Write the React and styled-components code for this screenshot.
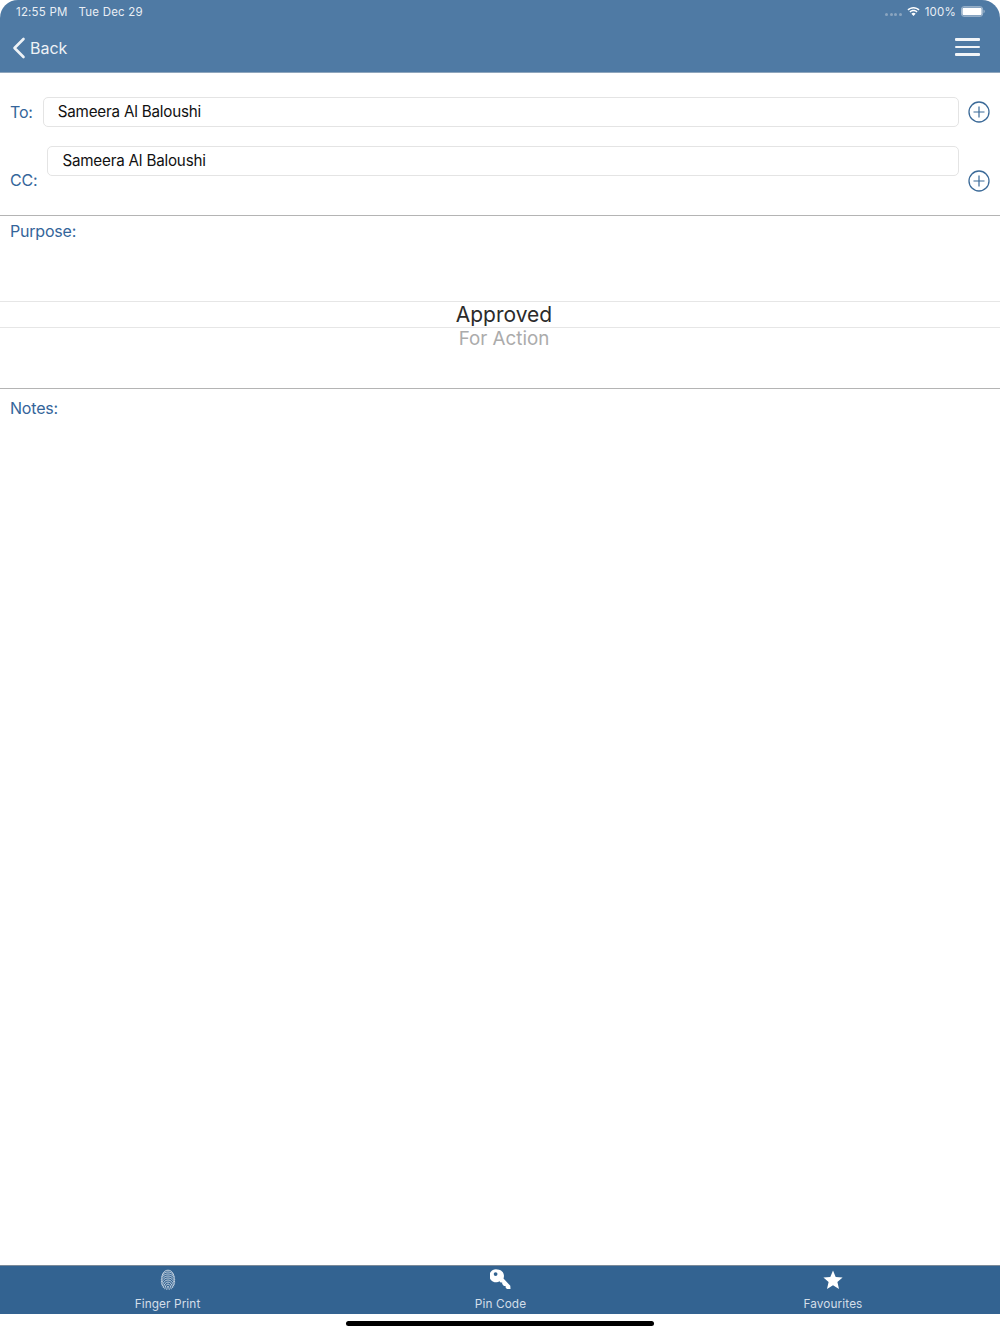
import styled, { createGlobalStyle } from 'styled-components'

const GlobalStyle = createGlobalStyle`
  html, body { margin: 0; padding: 0; background: #fff; }
  body { font-family: Inter, "Liberation Sans", sans-serif; }
`

const Page = styled.div`
  width: 1000px;
  height: 1334px;
  display: flex;
  flex-direction: column;
  overflow: hidden;
  background: #fff;
`

const Header = styled.header`
  height: 72px;
  flex: none;
  background: #4f7aa4;
  border-radius: 18px 18px 0 0;
  border-bottom: 1px solid #8fa6bd;
  color: #fff;
`

const StatusBar = styled.div`
  height: 24px;
  box-sizing: border-box;
  padding: 0 15px 1px 16px;
  display: flex;
  align-items: center;
  justify-content: space-between;
  font-size: 11.5px;
  letter-spacing: 0.2px;
  color: #e9eef4;
`

const StatusGroup = styled.div`
  display: flex;
  align-items: center;
  gap: ${p => p.$gap || 10}px;
`

const SignalDots = styled.div`
  display: flex;
  gap: 1.5px;
  margin-top: 6px;
  span {
    width: 3px;
    height: 3px;
    border-radius: 50%;
    background: #8ba5c0;
  }
`

const NavBar = styled.div`
  height: 48px;
  display: flex;
  align-items: center;
  justify-content: space-between;
  padding: 0 20px 0 12px;
`

const BackLink = styled.div`
  display: flex;
  align-items: center;
  gap: 4px;
  font-size: 16px;
  color: #eef2f6;
  svg { display: block; }
`

const Burger = styled.div`
  width: 25px;
  display: flex;
  flex-direction: column;
  gap: 5px;
  margin-top: -2px;
  span {
    height: 2.5px;
    background: #f2f5f8;
    border-radius: 1px;
  }
`

const RecipientSection = styled.section`
  height: 143px;
  flex: none;
  padding-top: 24px;
  box-sizing: border-box;
  border-bottom: 1px solid #b4b4b4;
`

const RecipientRow = styled.div`
  display: flex;
  align-items: ${p => (p.$top ? 'flex-start' : 'center')};
  padding: 0 10px;
  margin-bottom: 19px;
`

const FieldLabel = styled.label`
  font-size: 16px;
  letter-spacing: -0.2px;
  color: #34659a;
  line-height: 20px;
`

const RowLabel = styled(FieldLabel)`
  flex: none;
  margin-right: 10px;
  ${p => p.$low && 'margin-top: 24px;'}
`

const NameInput = styled.div`
  flex: 1;
  height: 30px;
  box-sizing: border-box;
  border: 1px solid #e4e4e4;
  border-radius: 5px;
  padding: 0 0 1px 14px;
  display: flex;
  align-items: center;
  font-size: 15.2px;
  letter-spacing: -0.2px;
  color: #111;
`

const AddButton = styled.div`
  flex: none;
  width: 22px;
  height: 22px;
  margin-left: 9px;
  color: #3b6a98;
  ${p => p.$low && 'margin-top: 24px;'}
  svg { display: block; }
`

const Section = styled.section`
  flex: none;
  padding: 9px 10px 0;
`

const Picker = styled.div`
  height: 173px;
  flex: none;
  box-sizing: border-box;
  border-bottom: 1px solid #b4b4b4;
  display: flex;
  flex-direction: column;
`

const PurposeLabel = styled(FieldLabel)`
  display: block;
  padding: 5px 10px 0;
  height: 85px;
  box-sizing: border-box;
  flex: none;
`

const PickerSelected = styled.div`
  height: 25px;
  flex: none;
  border-top: 1px solid #e6e6e6;
  border-bottom: 1px solid #e6e6e6;
  display: flex;
  justify-content: center;
  align-items: center;
  padding-left: 8px;
  font-size: 21px;
  color: #2b2b2b;
`

const PickerNext = styled.div`
  text-align: center;
  padding-left: 8px;
  font-size: 18.8px;
  line-height: 22px;
  color: #ababab;
`

const Spacer = styled.div`
  flex: 1;
`

const TabBar = styled.nav`
  height: 49px;
  flex: none;
  box-sizing: border-box;
  background: #336391;
  border-top: 1px solid #7b8a99;
  display: grid;
  grid-template-columns: 335px 331px 334px;
`

const Tab = styled.div`
  display: flex;
  flex-direction: column;
  align-items: center;
  color: #d3dee9;
  font-size: 11.8px;
  line-height: 14px;
  letter-spacing: 0.1px;
  svg {
    display: block;
    height: 24px;
    margin-top: 2px;
    margin-bottom: 5px;
  }
`

const HomeArea = styled.div`
  height: 20px;
  flex: none;
  display: flex;
  justify-content: center;
  padding-top: 7px;
  box-sizing: border-box;
`

const HomeIndicator = styled.div`
  width: 308px;
  height: 5px;
  border-radius: 3px;
  background: #000;
`

const BackChevron = () => (
  <svg width="14" height="22" viewBox="0 0 14 22" fill="none" stroke="#eef2f6" strokeWidth="2.600" strokeLinecap="round" strokeLinejoin="round">
    <path d="M11.500 2 L2.500 11 L11.500 20" />
  </svg>
)

const WifiIcon = () => (
  <svg width="13" height="11" viewBox="0 0 14 11" fill="#fff">
    <path d="M7 2.300c2.100 0 4 .8 5.400 2.100l1.100-1.200C11.800 1.600 9.500.6 7 .6S2.200 1.600.5 3.200l1.100 1.200C3 3.100 4.900 2.300 7 2.300z" />
    <path d="M7 5.300c1.300 0 2.400.5 3.300 1.300l1.100-1.200C10.200 4.300 8.700 3.700 7 3.700s-3.200.6-4.400 1.700l1.100 1.200C4.600 5.800 5.700 5.300 7 5.300z" />
    <path d="M7 6.900c-.9 0-1.700.3-2.300.9L7 10.400l2.300-2.600C8.700 7.200 7.900 6.900 7 6.900z" />
  </svg>
)

const BatteryIcon = () => (
  <svg width="24" height="11" viewBox="0 0 25 11">
    <rect x="0.500" y="0.500" width="22" height="10" rx="2.500" fill="none" stroke="#a9bdd1" />
    <rect x="1.500" y="1.500" width="20" height="8" rx="1.500" fill="#fff" />
    <path d="M23.500 3.800c.7.200 1.200.9 1.200 1.700s-.5 1.500-1.200 1.700z" fill="#a9bdd1" />
  </svg>
)

const PlusCircle = () => (
  <svg width="22" height="22" viewBox="0 0 22 22" fill="none" stroke="currentColor">
    <circle cx="11" cy="11" r="10" strokeWidth="1.300" />
    <path d="M11 5.500v11M5.500 11h11" strokeWidth="1.200" />
  </svg>
)

const FingerprintIcon = () => (
  <svg width="16" height="24" viewBox="0 0 16 24" fill="none" stroke="#e3eaf1" strokeWidth="0.800" strokeLinecap="round">
    <path d="M2.500 6.500C3.500 3.500 5.500 2.200 8 2.200s4.500 1.300 5.500 4.300" />
    <path d="M1.600 9C2.600 5.500 5 4 8 4s5.400 1.500 6.400 5" />
    <path d="M1.300 11.500C2 7.800 4.800 6 8 6s6 1.800 6.700 5.500" />
    <path d="M1.300 14C2 10 4.800 8 8 8s6 2 6.700 6" />
    <path d="M1.600 16.200C2.200 12.200 4.800 10 8 10s5.800 2.200 6.400 6.200" />
    <path d="M2.300 18C3 14.500 5.200 12 8 12s5 2.500 5.700 6" />
    <path d="M3.300 19.600C4 16.500 5.600 14 8 14s4 2.500 4.700 5.600" />
    <path d="M4.800 20.800C5.300 18.400 6.300 16 8 16s2.700 2.400 3.200 4.800" />
    <path d="M6.800 21.500c.2-1.300.6-3.500 1.200-3.500s1 2.200 1.200 3.500" />
  </svg>
)

const KeyIcon = () => (
  <svg width="22" height="24" viewBox="0 0 22 24" fill="#fff">
    <path fillRule="evenodd" d="M7.500 1.500a6.500 6.500 0 0 1 6 8.900l6.800 7.300.2 3.300-3.600.1-1.300-1.500v-1.700h-1.700l-1.700-1.900v-1.600h-1.600l-1.100-1.200A6.500 6.500 0 1 1 7.500 1.500zM5.600 4.200a1.900 1.900 0 1 0 0 3.800 1.900 1.900 0 0 0 0-3.800z" />
  </svg>
)

const StarIcon = () => (
  <svg width="20" height="24" viewBox="0 0 20 24" fill="#fff">
    <path d="M10 2.500l2.700 6.400 6.900.6-5.200 4.600 1.600 6.800L10 17.300l-6 3.600 1.600-6.800L.4 9.500l6.900-.6z" />
  </svg>
)

const tabs = [
  { label: 'Finger Print', icon: <FingerprintIcon /> },
  { label: 'Pin Code', icon: <KeyIcon /> },
  { label: 'Favourites', icon: <StarIcon /> }
]

export default function App() {
  return (
    <Page>
      <GlobalStyle />
      <Header>
        <StatusBar>
          <StatusGroup $gap={11}>
            <span>12:55 PM</span>
            <span>Tue Dec 29</span>
          </StatusGroup>
          <StatusGroup $gap={5}>
            <SignalDots><span /><span /><span /><span /></SignalDots>
            <WifiIcon />
            <span>100%</span>
            <BatteryIcon />
          </StatusGroup>
        </StatusBar>
        <NavBar>
          <BackLink>
            <BackChevron />
            <span>Back</span>
          </BackLink>
          <Burger><span /><span /><span /></Burger>
        </NavBar>
      </Header>

      <RecipientSection>
        <RecipientRow>
          <RowLabel>To:</RowLabel>
          <NameInput>Sameera Al Baloushi</NameInput>
          <AddButton><PlusCircle /></AddButton>
        </RecipientRow>
        <RecipientRow $top>
          <RowLabel $low>CC:</RowLabel>
          <NameInput>Sameera Al Baloushi</NameInput>
          <AddButton $low><PlusCircle /></AddButton>
        </RecipientRow>
      </RecipientSection>

      <Picker>
        <PurposeLabel>Purpose:</PurposeLabel>
        <PickerSelected>Approved</PickerSelected>
        <PickerNext>For Action</PickerNext>
      </Picker>

      <Section>
        <FieldLabel>Notes:</FieldLabel>
      </Section>

      <Spacer />

      <TabBar>
        {tabs.map(tab => (
          <Tab key={tab.label}>
            {tab.icon}
            <span>{tab.label}</span>
          </Tab>
        ))}
      </TabBar>
      <HomeArea><HomeIndicator /></HomeArea>
    </Page>
  )
}
